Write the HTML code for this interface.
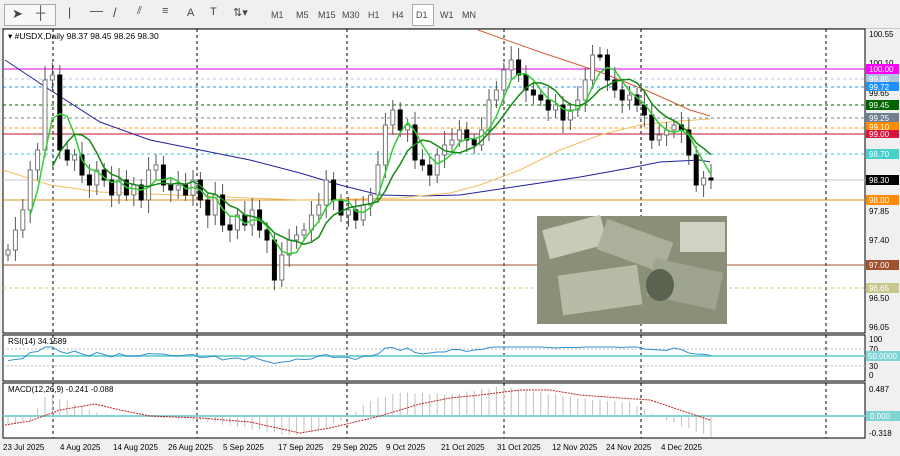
<!DOCTYPE html><html><head><meta charset="utf-8"><style>
body{margin:0;width:900px;height:456px;background:#f0f0f0;font-family:"Liberation Sans",sans-serif;overflow:hidden;position:relative}
.tb{position:absolute;top:0;left:0;width:900px;height:28px;background:#f0f0f0;border-bottom:1px solid #c8c8c8;font-size:9px;color:#444}
.tb span{position:absolute;top:10px}
svg{position:absolute;top:0;left:0}
</style></head><body>
<div class="tb">
<div style="position:absolute;left:4px;top:4px;width:50px;height:20px;border:1px solid #aaa;background:#f8f8f8"></div>
<div style="position:absolute;left:412px;top:4px;width:20px;height:20px;border:1px solid #aaa;background:#fff"></div>
<span style="left:12px;top:6px;font-size:13px">➤</span><span style="left:36px;top:5px;font-size:13px">┼</span>
<span style="left:68px;top:5px;font-size:12px">|</span><span style="left:90px;top:3px;font-size:13px">—</span><span style="left:113px;top:5px;font-size:13px">/</span>
<span style="left:137px;top:5px;font-size:11px">⫽</span><span style="left:162px;top:5px;font-size:11px">≡</span><span style="left:187px;top:7px;font-size:11px">A</span><span style="left:210px;top:6px;font-size:11px">T</span><span style="left:233px;top:6px;font-size:11px">⇅▾</span>
<span style="left:271px">M1</span><span style="left:296px">M5</span><span style="left:318px">M15</span><span style="left:342px">M30</span><span style="left:368px">H1</span><span style="left:392px">H4</span><span style="left:416px">D1</span><span style="left:440px">W1</span><span style="left:462px">MN</span>
</div>
<svg id="s" width="900" height="456" xmlns="http://www.w3.org/2000/svg" font-family="Liberation Sans, sans-serif">
<rect x="3" y="29" width="862" height="304" fill="#fff" stroke="#000"/>
<rect x="3" y="335" width="862" height="46" fill="#fff" stroke="#000"/>
<rect x="3" y="383" width="862" height="55" fill="#fff" stroke="#000"/>
<g stroke="#000" stroke-dasharray="3,3" stroke-width="1">
<line x1="53" y1="29" x2="53" y2="438"/><line x1="197" y1="29" x2="197" y2="438"/><line x1="347" y1="29" x2="347" y2="438"/><line x1="504" y1="29" x2="504" y2="438"/><line x1="641" y1="29" x2="641" y2="438"/><line x1="826" y1="29" x2="826" y2="438"/></g>
<g stroke-width="1">
<line x1="3" x2="865" y1="69" y2="69" stroke="#e000e0"/>
<line x1="3" x2="865" y1="79" y2="79" stroke="#b0c4de" stroke-dasharray="3,3"/>
<line x1="3" x2="865" y1="87" y2="87" stroke="#1e90ff" stroke-dasharray="3,3"/>
<line x1="3" x2="865" y1="105" y2="105" stroke="#006400" stroke-dasharray="3,3"/>
<line x1="3" x2="865" y1="118" y2="118" stroke="#708090" stroke-dasharray="3,3"/>
<line x1="3" x2="865" y1="128" y2="128" stroke="#ff9900" stroke-dasharray="3,3"/>
<line x1="3" x2="865" y1="134" y2="134" stroke="#c01030"/>
<line x1="3" x2="865" y1="154" y2="154" stroke="#40c0c0" stroke-dasharray="3,3"/>
<line x1="3" x2="865" y1="180" y2="180" stroke="#c8c8c8"/>
<line x1="3" x2="865" y1="200" y2="200" stroke="#e09020"/>
<line x1="3" x2="865" y1="265" y2="265" stroke="#a0522d"/>
<line x1="3" x2="865" y1="288" y2="288" stroke="#c8c070" stroke-dasharray="3,3"/>
</g>
<polyline fill="none" stroke="#2020a0" points="5,60 50,90 100,122 150,140 200,150 250,160 300,173 340,185 380,195 420,196 460,195 520,186 580,177 630,168 660,162 700,160 710,162"/>
<polyline fill="none" stroke="#f0c060" points="3,170 50,185 100,192 200,196 300,200 400,198 450,193 480,185 520,170 560,150 600,135 640,125 680,121 710,119"/>
<polyline fill="none" stroke="#d06030" points="478,30 540,52 600,72 650,92 690,110 710,116"/>
<g id="c"></g>
<text x="8" y="39" font-size="8.5">▾ #USDX,Daily  98.37 98.45 98.26 98.30</text>
<g font-size="8" fill="#000">
<text x="869" y="37">100.55</text><text x="869" y="66">100.10</text><text x="869" y="96">99.65</text><text x="869" y="214">97.85</text><text x="869" y="243">97.40</text><text x="869" y="301">96.50</text><text x="869" y="330">96.05</text>
</g>
<g font-size="8">
<rect x="866" y="64" width="33" height="10" fill="#ff00ff"/><text x="869" y="72" fill="#fff">100.00</text>
<rect x="866" y="74" width="33" height="9" fill="#b0c4de"/><text x="869" y="82" fill="#fff">99.85</text>
<rect x="866" y="82" width="33" height="9" fill="#1e90ff"/><text x="869" y="90" fill="#fff">99.72</text>
<rect x="866" y="100" width="33" height="10" fill="#006400"/><text x="869" y="108" fill="#fff">99.45</text>
<rect x="866" y="113" width="33" height="9" fill="#708090"/><text x="869" y="121" fill="#fff">99.25</text>
<rect x="866" y="122" width="33" height="9" fill="#ff8c00"/><text x="869" y="130" fill="#fff">99.10</text>
<rect x="866" y="130" width="33" height="8" fill="#dc143c"/><text x="869" y="137" fill="#fff">99.00</text>
<rect x="866" y="149" width="33" height="10" fill="#48d1cc"/><text x="869" y="157" fill="#fff">98.70</text>
<rect x="866" y="175" width="33" height="10" fill="#000"/><text x="869" y="183" fill="#fff">98.30</text>
<rect x="866" y="195" width="33" height="10" fill="#ff8c00"/><text x="869" y="203" fill="#fff">98.00</text>
<rect x="866" y="260" width="33" height="10" fill="#a0522d"/><text x="869" y="268" fill="#fff">97.00</text>
<rect x="866" y="283" width="33" height="10" fill="#c8c88c"/><text x="869" y="291" fill="#fff">96.65</text>
</g>
<g>
<rect x="537" y="216" width="190" height="108" fill="#8a8f78"/>
<rect x="545" y="222" width="60" height="30" fill="#c8cbb8" transform="rotate(-15 575 237)"/>
<rect x="600" y="230" width="70" height="32" fill="#aab09a" transform="rotate(20 635 246)"/>
<rect x="560" y="270" width="80" height="40" fill="#b8bca6" transform="rotate(-8 600 290)"/>
<rect x="650" y="265" width="70" height="38" fill="#9ea490" transform="rotate(12 685 284)"/>
<rect x="680" y="222" width="45" height="30" fill="#d0d2c4"/>
<ellipse cx="660" cy="285" rx="14" ry="16" fill="#5c6250"/>
</g>
<line x1="3" x2="865" y1="356" y2="356" stroke="#7fd4d4" stroke-width="2"/>
<line x1="3" x2="865" y1="349" y2="349" stroke="#bbb" stroke-dasharray="2,2"/>
<line x1="3" x2="865" y1="366" y2="366" stroke="#bbb" stroke-dasharray="2,2"/>
<polyline id="rsi" fill="none" stroke="#3090d0" points=""/>
<text x="8" y="344" font-size="8">RSI(14) 34.1589</text>
<g font-size="8"><text x="869" y="342">100</text><text x="869" y="352">70</text><text x="869" y="369">30</text><text x="869" y="378">0</text>
<rect x="866" y="351" width="34" height="10" fill="#7fd4d4"/><text x="868" y="359" fill="#fff">50.0000</text>
<text x="869" y="392">0.487</text><rect x="866" y="411" width="34" height="10" fill="#7fd4d4"/><text x="870" y="419" fill="#fff">0.000</text><text x="869" y="436">-0.318</text></g>
<line x1="3" x2="865" y1="416" y2="416" stroke="#7fd4d4" stroke-width="2"/>
<g id="h" stroke="#c0c0c0"></g>
<polyline fill="none" stroke="#c02020" stroke-dasharray="2,1" points="5,425 30,421 60,410 95,404 120,410 150,416 200,418 250,422 300,433 330,428 380,416 420,404 450,398 480,395 520,390 550,390 580,395 620,398 650,400 680,410 710,420"/>
<text x="8" y="392" font-size="8">MACD(12,26,9) -0.241 -0.088</text>
<g font-size="8"><text x="3" y="450">23 Jul 2025</text><text x="60" y="450">4 Aug 2025</text><text x="113" y="450">14 Aug 2025</text><text x="168" y="450">26 Aug 2025</text><text x="223" y="450">5 Sep 2025</text><text x="278" y="450">17 Sep 2025</text><text x="332" y="450">29 Sep 2025</text><text x="386" y="450">9 Oct 2025</text><text x="441" y="450">21 Oct 2025</text><text x="497" y="450">31 Oct 2025</text><text x="552" y="450">12 Nov 2025</text><text x="606" y="450">24 Nov 2025</text><text x="661" y="450">4 Dec 2025</text></g>
</svg>
<script>
var C=[250,230,210,170,150,80,75,150,160,155,175,185,170,180,195,180,195,185,200,170,165,185,190,185,195,180,200,215,195,225,230,215,225,210,230,240,280,255,240,235,230,215,205,180,200,215,210,220,205,195,165,125,110,130,125,160,165,175,155,145,140,130,140,145,130,100,90,70,60,75,90,95,100,110,105,120,110,100,80,55,55,80,90,100,95,105,115,140,135,130,125,130,155,185,178,180];
var n=C.length,g=document.getElementById('c'),s='';
function X(i){return 8+i*(703/(n-1));}
for(var i=0;i<n;i++){var o=i?C[i-1]:255,c=C[i],x=X(i),t=Math.min(o,c),b=Math.max(o,c),hi=t-6-(i*7%9),lo=b+6+(i*5%8);if(b-t<2)b=t+2;
s+='<line x1="'+x+'" x2="'+x+'" y1="'+hi+'" y2="'+lo+'" stroke="#555"/>';
s+='<rect x="'+(x-2)+'" y="'+t+'" width="4" height="'+(b-t)+'" fill="'+(c<o?'#fff':'#000')+'" stroke="'+(c<o?'#777':'#000')+'"/>';}
function ma(p){var pts=[];for(var i=p-1;i<n;i++){var a=0;for(var j=0;j<p;j++)a+=C[i-j];pts.push(X(i).toFixed(1)+','+(a/p).toFixed(1));}return pts.join(' ');}
s+='<polyline fill="none" stroke="#32cd32" stroke-width="1.5" points="'+ma(4)+'"/>';
s+='<polyline fill="none" stroke="#138a13" stroke-width="1.5" points="'+ma(7)+'"/>';
g.innerHTML=s;
var r=[];for(var i=0;i<n;i++){var v=356-(195-C[i])*0.1+(i%3-1);v=Math.max(347,Math.min(365,v));r.push(X(i).toFixed(1)+','+v.toFixed(1));}
document.getElementById('rsi').setAttribute('points',r.join(' '));
var K=[[5,425],[30,420],[45,396],[60,398],[80,405],[100,414],[150,416],[200,420],[250,428],[290,435],[320,430],[345,418],[370,400],[400,392],[450,394],[500,386],[530,390],[580,398],[630,402],[650,412],[680,425],[710,436]];
function hv(x){for(var k=1;k<K.length;k++)if(x<=K[k][0]){var a=K[k-1],b=K[k];return a[1]+(b[1]-a[1])*(x-a[0])/(b[0]-a[0]);}return 436;}
var h='';for(var i=0;i<n;i++){var x=X(i);h+='<line x1="'+x+'" x2="'+x+'" y1="416" y2="'+(hv(x)+(i%2)).toFixed(1)+'"/>';}
document.getElementById('h').innerHTML=h;
</script>
</body></html>
